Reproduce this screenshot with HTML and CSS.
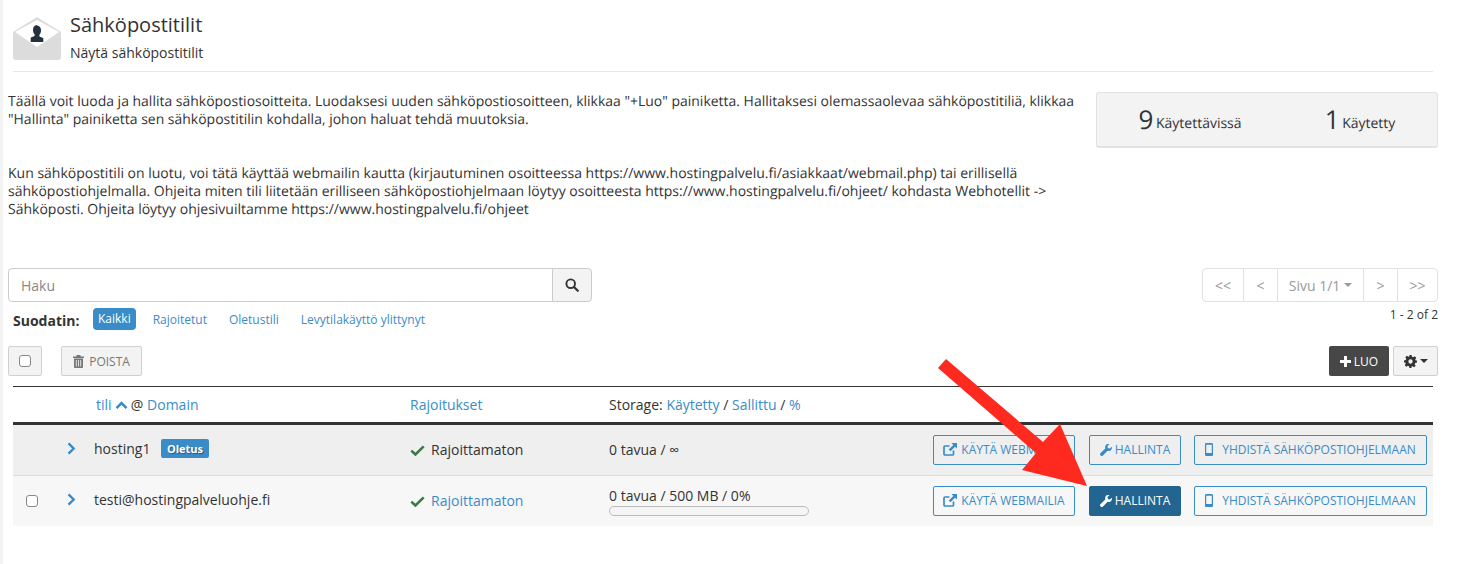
FILE: index.html
```html
<!DOCTYPE html>
<html lang="fi">
<head>
<meta charset="utf-8">
<title>Sähköpostitilit</title>
<link rel="stylesheet" href="styles.css">
</head>
<body>
<main class="page">
  <header class="head">
    <svg class="head-icon" width="48" height="44" viewBox="0 0 48 44">
      <path d="M24 1 48 16V41a3 3 0 0 1-3 3H3a3 3 0 0 1-3-3V16Z" fill="#dcdcdc"/>
      <path d="M24 4 2 16 24 31 46 16Z" fill="#fff"/>
      <path d="M24 9.500c2.700 0 4 2.200 4 4.800 0 2-.7 3.500-1.600 4.500v1.500c0 .8 3.400.9 3.900 2.300V26H17.700v-3.900c.5-1.400 3.900-1.500 3.900-2.300v-1.500c-.9-1-1.600-2.500-1.600-4.500 0-2.600 1.300-4.800 4-4.800Z" fill="#23303d"/>
    </svg>
    <div>
      <h1>Sähköpostitilit</h1>
      <p class="sub">Näytä sähköpostitilit</p>
    </div>
  </header>

  <section class="intro">
    <div class="intro-text">
      <p class="p1">Täällä voit luoda ja hallita sähköpostiosoitteita. Luodaksesi uuden sähköpostiosoitteen, klikkaa "+Luo" painiketta. Hallitaksesi olemassaolevaa sähköpostitiliä, klikkaa "Hallinta" painiketta sen sähköpostitilin kohdalla, johon haluat tehdä muutoksia.</p>
      <p class="p2">Kun sähköpostitili on luotu, voi tätä käyttää webmailin kautta (kirjautuminen osoitteessa https://www.hostingpalvelu.fi/asiakkaat/webmail.php) tai erillisellä sähköpostiohjelmalla. Ohjeita miten tili liitetään erilliseen sähköpostiohjelmaan löytyy osoitteesta https://www.hostingpalvelu.fi/ohjeet/ kohdasta Webhotellit -&gt; Sähköposti. Ohjeita löytyy ohjesivuiltamme https://www.hostingpalvelu.fi/ohjeet</p>
    </div>
    <div class="stats">
      <div class="stat"><b>9</b> Käytettävissä</div>
      <div class="stat"><b>1</b> Käytetty</div>
    </div>
  </section>

  <section class="tools">
    <div class="search">
      <div class="search-input">Haku</div>
      <div class="search-btn">
        <svg width="14" height="14" viewBox="0 0 14 14"><circle cx="5.700" cy="5.700" r="4.300" fill="none" stroke="#333" stroke-width="1.900"/><path d="M9 9l3.800 3.800" stroke="#333" stroke-width="2.200" stroke-linecap="round"/></svg>
      </div>
    </div>
    <nav class="pager">
      <span class="pg pg-a">&lt;&lt;</span><span class="pg pg-b">&lt;</span><span class="pg pg-c">Sivu 1/1<i class="caret"></i></span><span class="pg pg-b">&gt;</span><span class="pg pg-a">&gt;&gt;</span>
    </nav>
  </section>

  <section class="filters">
    <div class="filter-list">
      <strong>Suodatin:</strong>
      <a class="f active">Kaikki</a>
      <a class="f">Rajoitetut</a>
      <a class="f">Oletustili</a>
      <a class="f">Levytilakäyttö ylittynyt</a>
    </div>
    <div class="count">1 - 2 of 2</div>
  </section>

  <section class="actions">
    <div class="act-left">
      <span class="btn-check"><span class="check"></span></span>
      <span class="btn-del">
        <svg width="11" height="13" viewBox="0 0 11 13"><path d="M3.800 0h3.400l.7 1.500H11v1.400H0V1.500h3.100ZM1 3.500h9V12a1 1 0 0 1-1 1H2a1 1 0 0 1-1-1Z" fill="#777"/><path d="M3.300 5v6.500M5.500 5v6.500M7.700 5v6.500" stroke="#eee" stroke-width=".9"/></svg>
        POISTA
      </span>
    </div>
    <div class="act-right">
      <span class="btn-new">
        <svg width="11" height="11" viewBox="0 0 11 11"><path d="M4 0h3v4h4v3H7v4H4V7H0V4h4Z" fill="#fff"/></svg>
        LUO
      </span>
      <span class="btn-gear">
        <svg width="13" height="13" viewBox="0 0 24 24"><path fill-rule="evenodd" fill="#333" d="M10 0h4l.7 3.300 2.200.9 2.800-1.800 2.900 2.900-1.800 2.800.9 2.200L24 10v4l-3.300.7-.9 2.200 1.800 2.800-2.900 2.900-2.800-1.800-2.200.9L14 24h-4l-.7-3.300-2.200-.9-2.800 1.800-2.900-2.900 1.800-2.800-.9-2.200L0 14v-4l3.300-.7.900-2.200-1.800-2.800 2.900-2.900 2.800 1.800 2.200-.9ZM12 8a4 4 0 1 0 0 8 4 4 0 0 0 0-8Z"/></svg>
        <i class="caret dark"></i>
      </span>
    </div>
  </section>

  <table class="accounts">
    <colgroup><col class="c1"><col class="c2"><col class="c3"><col class="c4"><col class="c5"></colgroup>
    <thead>
      <tr>
        <th></th>
        <th class="th-name"><a>tili</a> <svg class="up" width="13" height="9" viewBox="0 0 13 9"><path d="M1.500 7.200 6.500 2.200l5 5" fill="none" stroke="#3a8cc8" stroke-width="2.600"/></svg> @ <a>Domain</a></th>
        <th><a>Rajoitukset</a></th>
        <th>Storage: <a>Käytetty</a> / <a>Sallittu</a> / <a>%</a></th>
        <th></th>
      </tr>
    </thead>
    <tbody>
      <tr class="r1">
        <td></td>
        <td><div class="name">
          <svg class="chev" width="9" height="13" viewBox="0 0 9 13"><path d="M1.500 1.300 6.700 6.500l-5.200 5.200" fill="none" stroke="#3a8cc8" stroke-width="2.400"/></svg>
          <span class="nm">hosting1</span><span class="badge">Oletus</span></div></td>
        <td><svg class="ok" width="15" height="11" viewBox="0 0 15 11"><path d="M1.300 5.600 5.400 9.500 13.700 1.400" fill="none" stroke="#3a7a45" stroke-width="2.600"/></svg><span class="lim">Rajoittamaton</span></td>
        <td>0 tavua / ∞</td>
        <td><div class="row-btns">
          <a class="b b1"><svg width="14" height="13" viewBox="0 0 14 13"><path d="M10.500 7.500V11a1 1 0 0 1-1 1H2a1 1 0 0 1-1-1V4a1 1 0 0 1 1-1h4.500" fill="none" stroke="currentColor" stroke-width="1.700"/><path d="M8.500 0H14v5.500L12 3.700 7.500 8.300 5.700 6.500 10.300 2Z" fill="currentColor"/></svg>KÄYTÄ WEBMAILIA</a>
          <a class="b b2"><svg width="12" height="12" viewBox="0 0 12 12"><path d="M11.800 2.700c.4 1.600-.1 3-1.300 3.800-1 .6-2 .6-2.900.3L3 11.500a1.200 1.200 0 0 1-2.400-2.400L5.300 4.400C5 3.500 5 2.400 5.600 1.500 6.400.3 7.800-.2 9.400.2L7.500 2.100l.4 2 2 .5Z" fill="currentColor"/></svg>HALLINTA</a>
          <a class="b b3"><svg width="8" height="13" viewBox="0 0 8 13"><path fill-rule="evenodd" d="M1.300 0h5.400C7.400 0 8 .6 8 1.300v10.400c0 .7-.6 1.300-1.300 1.300H1.300C.6 13 0 12.400 0 11.700V1.300C0 .6.600 0 1.300 0ZM1.200 1.700v8.400h5.600V1.700Z" fill="currentColor"/></svg>YHDISTÄ SÄHKÖPOSTIOHJELMAAN</a>
        </div></td>
      </tr>
      <tr class="r2">
        <td><span class="check row-check"></span></td>
        <td><div class="name">
          <svg class="chev" width="9" height="13" viewBox="0 0 9 13"><path d="M1.500 1.300 6.700 6.500l-5.200 5.200" fill="none" stroke="#3a8cc8" stroke-width="2.400"/></svg>
          <span class="nm">testi@hostingpalveluohje.fi</span></div></td>
        <td><svg class="ok" width="15" height="11" viewBox="0 0 15 11"><path d="M1.300 5.600 5.400 9.500 13.700 1.400" fill="none" stroke="#3a7a45" stroke-width="2.600"/></svg><a class="lim">Rajoittamaton</a></td>
        <td class="usage-cell"><div class="usage">0 tavua / 500 MB / 0%</div><div class="bar"></div></td>
        <td><div class="row-btns">
          <a class="b b1"><svg width="14" height="13" viewBox="0 0 14 13"><path d="M10.500 7.500V11a1 1 0 0 1-1 1H2a1 1 0 0 1-1-1V4a1 1 0 0 1 1-1h4.500" fill="none" stroke="currentColor" stroke-width="1.700"/><path d="M8.500 0H14v5.500L12 3.700 7.500 8.300 5.700 6.500 10.300 2Z" fill="currentColor"/></svg>KÄYTÄ WEBMAILIA</a>
          <a class="b b2 solid"><svg width="12" height="12" viewBox="0 0 12 12"><path d="M11.800 2.700c.4 1.600-.1 3-1.300 3.800-1 .6-2 .6-2.900.3L3 11.500a1.200 1.200 0 0 1-2.400-2.400L5.300 4.400C5 3.500 5 2.400 5.600 1.500 6.400.3 7.800-.2 9.400.2L7.500 2.100l.4 2 2 .5Z" fill="currentColor"/></svg>HALLINTA</a>
          <a class="b b3"><svg width="8" height="13" viewBox="0 0 8 13"><path fill-rule="evenodd" d="M1.300 0h5.400C7.400 0 8 .6 8 1.300v10.400c0 .7-.6 1.300-1.300 1.300H1.300C.6 13 0 12.400 0 11.700V1.300C0 .6.600 0 1.300 0ZM1.200 1.700v8.400h5.600V1.700Z" fill="currentColor"/></svg>YHDISTÄ SÄHKÖPOSTIOHJELMAAN</a>
        </div></td>
      </tr>
    </tbody>
  </table>

  <svg class="arrow" width="156" height="134" viewBox="0 0 156 134">
    <path d="M12 4 109 87 126 69 153 131 88 115 102 98 4 13Z" fill="#ff2a1f"/>
  </svg>
</main>
</body>
</html>
```
FILE: styles.css
```css
* { box-sizing: border-box; }
html, body { margin: 0; height: 100%; overflow: hidden; }
body {
  background: #fff;
  color: #333;
  font-family: "Open Sans", "Liberation Sans", sans-serif;
  font-size: 14px;
}
.page {
  position: relative;
  height: 564px;
  padding: 0 22px 0 5px;
  border-left: 3px solid #f3f3f3;
}
a { color: #3a8cc8; }

/* header */
.head {
  display: flex;
  gap: 9px;
  align-items: flex-start;
  height: 72px;
  margin: 0 5px 0 5px;
  padding-top: 16px;
  border-bottom: 1px solid #e8e8e8;
}
.head-icon { flex: none; }
h1 { margin: -4px 0 0; font-size: 20px; font-weight: 400; line-height: 26px; }
.sub { margin: 6px 0 0; font-size: 14px; line-height: 18px; }

/* intro */
.intro { display: flex; justify-content: space-between; height: 196px; }
.intro-text {
  width: 1078px;
  padding-top: 21px;
  line-height: 18.300px;
  font-size: 14px;
  text-rendering: geometricPrecision;
}
.intro-text p { margin: 0; }
.p1 { font-size: 13.975px; }
.p2 { margin-top: 35px !important; }
.stats {
  display: flex;
  width: 342px;
  height: 56px;
  margin-top: 20px;
  padding-left: 8px;
  background: #f3f3f3;
  border: 1px solid #e2e2e2;
  border-bottom-width: 2px;
  border-radius: 3px;
  text-rendering: geometricPrecision;
}
.stat { flex: 0 0 170px; text-align: center; line-height: 52px; font-size: 14px; white-space: nowrap; }
.stat b { font-weight: 400; font-size: 26px; vertical-align: -1px; margin-right: -1px; }

/* search + pager */
.tools { display: flex; justify-content: space-between; height: 34px; }
.search { display: flex; width: 584px; }
.search-input {
  flex: 1;
  padding-left: 12px;
  line-height: 33px;
  color: #888;
  border: 1px solid #ccc;
  border-radius: 4px 0 0 4px;
}
.search-btn {
  display: flex;
  align-items: center;
  justify-content: center;
  width: 40px;
  margin-left: -1px;
  background: #f3f3f3;
  border: 1px solid #ccc;
  border-radius: 0 4px 4px 0;
}
.pager { display: flex; height: 34px; border: 1px solid #e2e2e2; border-radius: 4px; color: #999; }
.pg { display: flex; align-items: center; justify-content: center; border-left: 1px solid #e2e2e2; font-size: 14px; }
.pg:first-child { border-left: 0; }
.pg-a { width: 40px; }
.pg-b { width: 34px; }
.pg-c { width: 86px; }
.caret {
  display: inline-block;
  margin-left: 4px;
  border: 4px solid transparent;
  border-top-color: #999;
  border-bottom: 0;
}
.caret.dark { border-top-color: #333; margin-left: 3px; }

/* filters */
.filters { display: flex; justify-content: space-between; height: 44px; }
.filter-list { display: flex; align-items: center; height: 22px; margin-top: 6px; padding-left: 5px; font-size: 12px; }
.filter-list strong { font-size: 14px; width: 80px; padding-top: 2px; }
.f { padding: 2px 5px 0; margin-right: 12px; line-height: 22px; }
.f.active { padding-top: 0; background: #3a8cc8; color: #fff; border-radius: 4px; margin-right: 12px; line-height: 22px; }
.count { padding-top: 5px; font-size: 12px; line-height: 16px; }

/* action row */
.actions { display: flex; justify-content: space-between; height: 30px; }
.act-left, .act-right { display: flex; gap: 19px; }
.act-right { gap: 4px; }
.btn-check, .btn-del, .btn-gear {
  display: flex;
  align-items: center;
  justify-content: center;
  height: 30px;
  background: #f3f3f3;
  border: 1px solid #d0d0d0;
  border-radius: 2px;
}
.btn-check { width: 34px; }
.check {
  display: block;
  width: 12px;
  height: 12px;
  background: #fff;
  border: 1px solid #888;
  border-radius: 3px;
}
.btn-del { width: 81px; gap: 5px; font-size: 12px; color: #777; }
.btn-new {
  display: flex;
  align-items: center;
  justify-content: center;
  gap: 3px;
  width: 60px;
  height: 30px;
  background: #474747;
  color: #fff;
  font-size: 12px;
  border-radius: 2px;
}
.btn-gear { width: 45px; }

/* table */
.accounts {
  width: 1420px;
  margin: 10px 0 0 5px;
  border-collapse: collapse;
  table-layout: fixed;
  border-top: 1px solid #333;
}
.c1 { width: 43px; }
.c2 { width: 354px; }
.c3 { width: 199px; }
.c4 { width: 320px; }
.c5 { width: 504px; }
th {
  height: 37px;
  padding: 0;
  font-weight: 400;
  text-align: left;
  font-size: 14px;
  border-bottom: 3px solid #333;
}
.th-name { padding-left: 40px; }
.up { margin: 0 -1px 0 0; }
td { padding: 0; font-size: 14px; }
.r1 td { height: 52px; padding-bottom: 1px; background: #efefef; border-bottom: 1px solid #ddd; }
.r2 td { height: 50px; background: #f7f7f7; }
.r2 .usage-cell { padding-top: 3px; }
.name { display: flex; align-items: center; margin-top: -2px; }
.chev { flex: none; margin: 0 18px 0 11px; }
.badge {
  margin-left: 11px;
  padding: 0 5.500px;
  line-height: 19px;
  background: #3a8cc8;
  color: #fff;
  font-size: 11px;
  font-weight: 700;
  border-radius: 2px;
  text-shadow: 1px 1px 1px #24587f;
}
.ok { vertical-align: -1px; margin-right: 6px; }
.row-check { margin-left: 13px; }
.usage { line-height: 16px; }
.bar { width: 200px; height: 10px; margin-top: 2px; background: #f5f5f5; border: 1px solid #bbb; border-radius: 5px; }
.row-btns { display: flex; justify-content: flex-end; gap: 14px; padding-right: 6px; }
.b {
  display: flex;
  align-items: center;
  justify-content: center;
  height: 30px;
  gap: 3px;
  background: transparent;
  color: #3a8cc8;
  border: 1px solid #3a8cc8;
  border-radius: 2px;
  font-size: 12px;
}
.b1 { width: 142px; gap: 4px; }
.b2 { width: 92px; margin-right: -1px; }
.b3 { width: 233px; gap: 9px; }
.b.solid { background: #236591; border-color: #236591; color: #fff; }

/* annotation */
.arrow { position: absolute; left: 931px; top: 355px; }
```
